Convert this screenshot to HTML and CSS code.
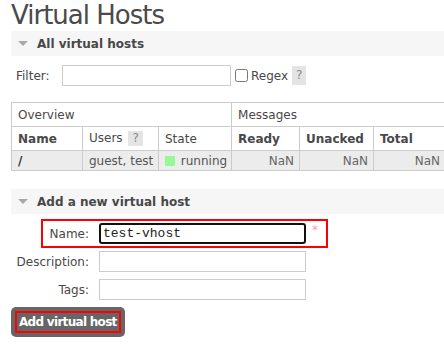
FILE: index.html
```html
<!DOCTYPE html>
<html>
<head>
    <meta charset="utf-8">
    <meta name="viewport" content="width=device-width, initial-scale=1">
    <title>Virtual Hosts</title>
    <link rel="stylesheet" href="styles.css">
</head>
<body>
    <div id="main">
        <h1>Virtual Hosts</h1>

        <div class="section">
            <h2 class="section-head"><span class="arrow"></span>All virtual hosts</h2>
            <div class="filter">
                <label class="filter-label" for="filter">Filter:</label>
                <input type="text" id="filter" class="filter-input">
                <label class="regex"><input type="checkbox" class="check"> Regex</label>
                <span class="help">?</span>
            </div>

            <table class="list">
                <colgroup>
                    <col class="c-name">
                    <col class="c-users">
                    <col class="c-state">
                    <col class="c-ready">
                    <col class="c-unacked">
                    <col class="c-total">
                </colgroup>
                <thead>
                    <tr class="group">
                        <th colspan="3">Overview</th>
                        <th colspan="3">Messages</th>
                    </tr>
                    <tr class="cols">
                        <th class="strong">Name</th>
                        <th>Users <span class="help small">?</span></th>
                        <th>State</th>
                        <th class="strong">Ready</th>
                        <th class="strong">Unacked</th>
                        <th class="strong">Total</th>
                    </tr>
                </thead>
                <tbody>
                    <tr class="alt1">
                        <td class="vhost">/</td>
                        <td>guest, test</td>
                        <td><span class="status-green"></span> running</td>
                        <td class="r">NaN</td>
                        <td class="r">NaN</td>
                        <td class="r">NaN</td>
                    </tr>
                </tbody>
            </table>
        </div>

        <div class="section">
            <h2 class="section-head"><span class="arrow"></span>Add a new virtual host</h2>
            <form class="add-form">
                <div class="form-row marked">
                    <label class="form-label" for="name">Name:</label>
                    <input type="text" id="name" class="form-input active" value="test-vhost">
                    <span class="mand">*</span>
                    <span class="mark"></span>
                </div>
                <div class="form-row">
                    <label class="form-label" for="desc">Description:</label>
                    <input type="text" id="desc" class="form-input">
                </div>
                <div class="form-row">
                    <label class="form-label" for="tags">Tags:</label>
                    <input type="text" id="tags" class="form-input">
                </div>
                <button type="button" class="btn"><span class="btn-mark">Add virtual host</span></button>
            </form>
        </div>
    </div>
</body>
</html>
```

FILE: styles.css
```css
body {
    margin: 0;
    background-color: #fff;
    color: #484848;
    font-family: "DejaVu Sans", Verdana, sans-serif;
    font-size: 12px;
    overflow: hidden;
}

#main {
    padding-left: 11px;
    width: 433px;
}

h1 {
    margin: 0;
    height: 31px;
    font-size: 26px;
    line-height: 30px;
    font-weight: normal;
    letter-spacing: -1px;
    color: #4a4a4a;
}

.section-head {
    display: flex;
    align-items: center;
    margin: 0;
    height: 25px;
    background-color: #f6f6f6;
    font-size: 12px;
    font-weight: bold;
    color: #484848;
}

.arrow {
    width: 0;
    height: 0;
    margin: 0 9px 0 7px;
    border-left: 5px solid transparent;
    border-right: 5px solid transparent;
    border-top: 5px solid #aaa;
}

/* filter row */
.filter {
    display: flex;
    align-items: center;
    height: 21px;
    margin: 9px 0 16px 0;
}

.filter-label {
    margin-left: 5px;
    width: 46px;
}

.filter-input {
    box-sizing: border-box;
    width: 169px;
    height: 21px;
    margin: 0;
    border: 1px solid #ccc;
}

.regex {
    display: flex;
    align-items: center;
    margin-left: 4px;
}

.check {
    width: 13px;
    height: 13px;
    margin: 0 3px 0 0;
}

.help {
    display: inline-block;
    margin-left: 4px;
    padding: 0 4px;
    height: 19px;
    line-height: 19px;
    background-color: #e4e4e4;
    color: #888;
}

.help.small {
    margin-left: 2px;
    height: 15px;
    line-height: 15px;
    padding: 0 4px;
}

/* table */
.list {
    border-collapse: collapse;
    width: 434px;
    table-layout: fixed;
}

.c-name { width: 71px; }
.c-users { width: 76px; }
.c-state { width: 73px; }
.c-ready { width: 68px; }
.c-unacked { width: 74px; }
.c-total { width: 72px; }

.list th,
.list td {
    border: 1px solid #ccc;
    padding: 0 6px;
    text-align: left;
    white-space: nowrap;
    overflow: hidden;
}

.list th {
    height: 23px;
    font-weight: normal;
}

.list th.strong {
    font-weight: bold;
}

.list td {
    height: 19px;
    background-color: #ececec;
    color: #555;
}

.list td.vhost {
    font-weight: bold;
    color: #333;
}

.list td.r {
    text-align: right;
    padding-right: 5px;
    color: #666;
}

.status-green {
    display: inline-block;
    width: 10px;
    height: 10px;
    margin-right: 2px;
    vertical-align: -1px;
    background-color: #98f898;
}

/* add form */
.section + .section {
    margin-top: 18px;
}

.add-form {
    padding-top: 9px;
}

.form-row {
    display: flex;
    align-items: center;
    height: 21px;
    margin-bottom: 7px;
}

.form-row.marked {
    position: relative;
}

.form-label {
    width: 78px;
    text-align: right;
}

.form-input {
    box-sizing: border-box;
    width: 207px;
    height: 21px;
    margin: 0 0 0 10px;
    border: 1px solid #ccc;
    font-family: "Liberation Mono", monospace;
    font-size: 13px;
    padding: 0 3px;
}

.form-input.active {
    border: 2px solid #111;
    border-radius: 3px;
    color: #222;
    padding: 0 2px;
}

.mand {
    margin-left: 6px;
    align-self: flex-start;
    color: #f8a0a8;
    font-size: 12px;
    line-height: 14px;
}

.mark {
    position: absolute;
    left: 30px;
    top: -4px;
    width: 283px;
    height: 25px;
    border: 2px solid #f00;
    pointer-events: none;
}

.btn {
    display: block;
    margin-top: 3px;
    padding: 4px;
    border: none;
    border-radius: 5px;
    background-color: #666;
    font-family: "DejaVu Sans", Verdana, sans-serif;
    font-size: 12px;
    font-weight: bold;
    color: #fff;
}

.btn-mark {
    display: block;
    height: 18px;
    padding: 0 2px;
    line-height: 18px;
    letter-spacing: -0.7px;
    white-space: nowrap;
    border: 2px solid #f00;
}
```
